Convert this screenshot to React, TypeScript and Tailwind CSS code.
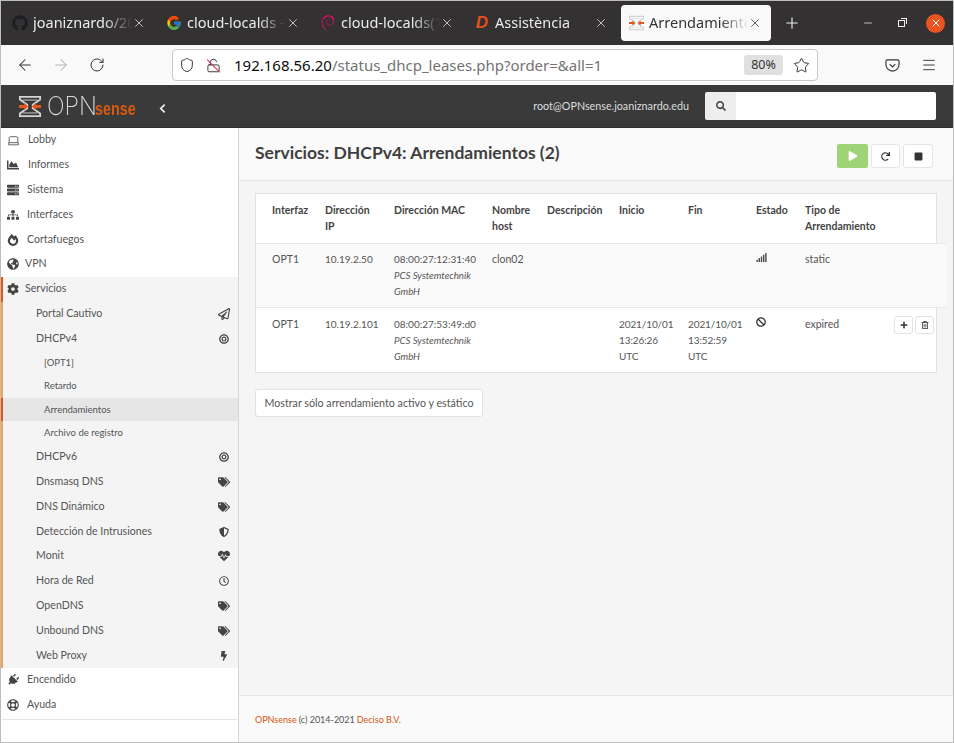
import type { ReactNode } from "react";
import { SiDebian } from "react-icons/si";
import { FcGoogle } from "react-icons/fc";
import {
    FaGithub,
    FaChartArea,
    FaServer,
    FaSitemap,
    FaFireAlt,
    FaGlobeAmericas,
    FaCog,
    FaRegPaperPlane,
    FaBullseye,
    FaTags,
    FaShieldAlt,
    FaHeartbeat,
    FaRegClock,
    FaBolt,
    FaPlug,
    FaRegLifeRing,
    FaPlay,
    FaRedo,
    FaStop,
    FaSearch,
    FaPlus,
    FaRegTrashAlt,
    FaBan,
    FaSignal,
} from "react-icons/fa";
import { ArrowLeft, ArrowRight, Laptop, RotateCw, Shield, LockOpen, Star, Menu, X, Plus, Minus } from "lucide-react";

const LogoMark = ({ className }: { className: string }) => (
    <svg viewBox="0 0 24 25" className={className}>
        <g fill="none" stroke="#d4d4d4" strokeWidth="2">
            <path d="M1 2h22v3L15 10.500v4L23 20v3H1v-3l8-5.500v-4L1 5z" />
            <path d="M4 5.500h16M4 19.500h16" strokeWidth="1" />
        </g>
        <path d="M0 11h5.500V8.500L10 12.500l-4.500 4V14H0zM24 11h-5.500V8.500L14 12.500l4.500 4V14H24z" fill="#e2571b" />
    </svg>
);

const Tab = ({ icon, title, active }: { icon: ReactNode; title: string; active?: boolean }) => (
    <div
        className={`flex items-center w-[150px] h-9 pl-[7px] pr-[9px] rounded-[4px] ${
            active ? "bg-[#f9f9fa] text-[#333]" : "text-[#ebebeb]"
        }`}
    >
        <span className="w-[16px] h-[16px] shrink-0 flex items-center justify-center">{icon}</span>
        <span className="ml-[5px] flex-1 min-w-0 overflow-hidden whitespace-nowrap text-[14.500px] [mask-image:linear-gradient(to_right,black_72%,transparent)]">
            {title}
        </span>
        <X size={14} strokeWidth={1.3} className="shrink-0" />
    </div>
);

const tabs = [
    { title: "joaniznardo/20", icon: <FaGithub size={16} className="text-[#1b1f23]" /> },
    { title: "cloud-localds -", icon: <FcGoogle size={16} /> },
    { title: "cloud-localds(1", icon: <SiDebian size={16} className="text-[#e0115f]" /> },
    {
        title: "Assistència",
        icon: <span className="font-['Liberation_Sans'] text-[17px] font-bold italic text-[#e2501f]">D</span>,
    },
];

type Item = { label: string; icon: ReactNode; level?: number; state?: "open" | "child" | "active"; labelPad?: string };

const ic = 12;
const side = 10;

const menu: Item[] = [
    { label: "Lobby", icon: <Laptop size={13} strokeWidth={1.5} />, labelPad: "w-[21px]" },
    { label: "Informes", icon: <FaChartArea size={ic} />, labelPad: "w-[21px]" },
    { label: "Sistema", icon: <FaServer size={ic} />, labelPad: "w-[20px]" },
    { label: "Interfaces", icon: <FaSitemap size={ic} />, labelPad: "w-[20px]" },
    { label: "Cortafuegos", icon: <FaFireAlt size={ic} />, labelPad: "w-[20px]" },
    { label: "VPN", icon: <FaGlobeAmericas size={ic} />, labelPad: "w-[18px]" },
    { label: "Servicios", icon: <FaCog size={ic} />, state: "open", labelPad: "w-[18px]" },
    { label: "Portal Cautivo", icon: <FaRegPaperPlane size={ic} />, level: 1, state: "child" },
    { label: "DHCPv4", icon: <FaBullseye size={side} />, level: 1, state: "child" },
    { label: "[OPT1]", icon: null, level: 2, state: "child" },
    { label: "Retardo", icon: null, level: 2, state: "child" },
    { label: "Arrendamientos", icon: null, level: 2, state: "active" },
    { label: "Archivo de registro", icon: null, level: 2, state: "child" },
    { label: "DHCPv6", icon: <FaBullseye size={side} />, level: 1, state: "child" },
    { label: "Dnsmasq DNS", icon: <FaTags size={ic} />, level: 1, state: "child" },
    { label: "DNS Dinámico", icon: <FaTags size={ic} />, level: 1, state: "child" },
    { label: "Detección de Intrusiones", icon: <FaShieldAlt size={side} />, level: 1, state: "child" },
    { label: "Monit", icon: <FaHeartbeat size={ic} />, level: 1, state: "child" },
    { label: "Hora de Red", icon: <FaRegClock size={side} />, level: 1, state: "child" },
    { label: "OpenDNS", icon: <FaTags size={ic} />, level: 1, state: "child" },
    { label: "Unbound DNS", icon: <FaTags size={ic} />, level: 1, state: "child" },
    { label: "Web Proxy", icon: <FaBolt size={side} />, level: 1, state: "child" },
    { label: "Encendido", icon: <FaPlug size={ic} className="rotate-45" />, labelPad: "w-[20px]" },
    { label: "Ayuda", icon: <FaRegLifeRing size={ic} />, labelPad: "w-[20px]" },
];

const MenuRow = ({ item }: { item: Item }) => {
    const { label, icon, level, state, labelPad } = item;
    const bar =
        state === "open" || state === "active"
            ? "border-[#e2570f]"
            : state === "child"
              ? "border-[#f3a25c]"
              : "border-transparent";
    const bg = state === "active" ? "bg-[#e6e6e6]" : state ? "bg-[#f4f4f4]" : "bg-white";

    if (level === 2) {
        return (
            <div className={`flex items-center h-[23.4px] pl-[41px] border-l-2 text-[9.500px] ${bar} ${bg}`}>
                {label}
            </div>
        );
    }
    if (level === 1) {
        return (
            <div className={`flex items-center justify-between h-[24.8px] pl-[33px] pr-[8px] border-l-2 text-[10.600px] ${bar} ${bg}`}>
                <span>{label}</span>
                <span className="flex justify-center w-[12px] text-[#444]">{icon}</span>
            </div>
        );
    }
    return (
        <div className={`flex items-center h-[24.8px] pl-[4px] border-l-2 text-[10.600px] ${bar} ${bg}`}>
            <span className={`${labelPad} shrink-0 text-[#444]`}>{icon}</span>
            <span>{label}</span>
        </div>
    );
};

const cols = "grid grid-cols-[53px_69px_98px_55px_72px_69px_68px_49px_89px_1fr] pl-[16px]";

const Vendor = () => (
    <div className="text-[9.700px] italic leading-[16px] text-[#555]">PCS Systemtechnik GmbH</div>
);

const IconBtn = ({ children }: { children: ReactNode }) => (
    <span className="flex items-center justify-center w-[19px] h-[18px] bg-white border border-[#e2e2e2] rounded-[3px] text-[#333]">
        {children}
    </span>
);

export default function App() {
    return (
        <div className="w-[954px] h-[743px] overflow-hidden flex flex-col border border-[#bdbdbd] font-['Lato','Noto_Sans',sans-serif] text-[#555] bg-white">
            {/* browser chrome */}
            <div className="flex items-center h-[44px] shrink-0 pl-[4px] bg-[#333132] font-['Noto_Sans',sans-serif]">
                <div className="flex items-center gap-[4px]">
                    {tabs.map(({ title, icon }) => (
                        <Tab key={title} title={title} icon={icon} />
                    ))}
                    <Tab
                        active
                        title="Arrendamiento"
                        icon={<LogoMark className="w-[15px] h-[16px]" />}
                    />
                </div>
                <Plus size={18} strokeWidth={1.5} className="ml-[12px] text-[#f0f0f0]" />
                <Minus size={12} strokeWidth={1.5} className="ml-[61px] text-[#eee]" />
                <span className="relative ml-[24px] w-[7px] h-[7px] border border-[#eee]">
                    <span className="absolute -top-[3px] -right-[3px] w-[6px] h-[6px] border-t border-r border-[#eee]" />
                </span>
                <span className="ml-[21px] flex items-center justify-center w-[19px] h-[19px] rounded-full bg-[#e95420] text-white">
                    <X size={12} strokeWidth={2} />
                </span>
            </div>
            <div className="flex items-center h-[40px] shrink-0 bg-[#f9f9fa] text-[#333] font-['Noto_Sans',sans-serif]">
                <ArrowLeft size={18} strokeWidth={1.4} className="ml-[15px]" />
                <ArrowRight size={18} strokeWidth={1.4} className="ml-[18px] text-[#b5b5b5]" />
                <RotateCw size={16} strokeWidth={1.5} className="ml-[19px]" />
                <div className="flex items-center ml-[67px] w-[646px] h-[32px] bg-white border border-[#c8c8c8] rounded-[4px]">
                    <Shield size={16} strokeWidth={1.5} className="ml-[6px]" />
                    <span className="relative ml-[11px] flex">
                        <LockOpen size={15} strokeWidth={1.5} />
                        <span className="absolute left-[7px] top-[-1px] h-[18px] w-[1px] -rotate-45 bg-[#e22850]" />
                    </span>
                    <span className="ml-[13px] text-[15px] whitespace-nowrap text-[#737373]">
                        <span className="text-[#0c0c0d]">192.168.56.20</span>/status_dhcp_leases.php?order=&all=1
                    </span>
                    <span className="ml-auto flex items-center justify-center w-[39px] h-[20px] rounded-[3px] bg-[#e0e0e1] text-[12.500px]">
                        80%
                    </span>
                    <Star size={17} strokeWidth={1.4} className="ml-[10px] mr-[7px]" />
                </div>
                <svg viewBox="0 0 16 16" className="ml-[67px] w-[15px] h-[15px]" fill="none" stroke="currentColor" strokeWidth="1.200">
                    <path d="M2.500 2h11A1.500 1.500 0 0 1 15 3.500V7a7 7 0 0 1-14 0V3.500A1.500 1.500 0 0 1 2.500 2z" />
                    <path d="M5 6.500l3 3 3-3" />
                </svg>
                <Menu size={16} strokeWidth={1.4} className="ml-[21px]" />
            </div>
            {/* opnsense header */}
            <div className="flex items-center h-[43px] shrink-0 bg-[#3a3a3a] border-b border-[#2e2e2e]">
                <div className="flex items-end ml-[17px] w-[124px] shrink-0">
                    <LogoMark className="w-[24px] h-[23px] shrink-0" />
                    <span className="ml-[5px] w-[45px] font-['Inter'] text-[26px] leading-[24px] font-extralight text-[#d8d8d8] origin-left scale-x-[0.9]">
                        OPN
                    </span>
                    <span className="ml-[3px] w-[41px] font-['Liberation_Sans'] text-[18px] leading-[18px] font-bold text-[#d9590f] origin-left scale-x-[0.8]">
                        sense
                    </span>
                </div>
                <svg viewBox="0 0 8 12" className="ml-[17px] mt-[5px] w-[7px] h-[11px]" fill="none" stroke="#eee" strokeWidth="2">
                    <path d="M6.500 1.500L2 6l4.500 4.500" />
                </svg>
                <span className="ml-auto text-[10.750px] text-[#ddd]">root@OPNsense.joaniznardo.edu</span>
                <div className="flex ml-[16px] mr-[17px] w-[231px] h-[28px] rounded-[2px] overflow-hidden">
                    <span className="flex items-center justify-center w-[31px] bg-[#eee] text-[#444]">
                        <FaSearch size={10} />
                    </span>
                    <span className="flex-1 bg-white" />
                </div>
            </div>
            <div className="flex flex-1 min-h-0">
                {/* sidebar */}
                <div className="w-[238px] shrink-0 bg-white border-r border-[#d6d6d6]">
                    {menu.map((item) => (
                        <MenuRow key={item.label} item={item} />
                    ))}
                    <div className="mt-[1px] mx-[1px] border-t border-[#e5e5e5]" />
                </div>
                {/* content */}
                <div className="flex-1 flex flex-col bg-[#f5f5f5] min-w-0">
                    <div className="flex items-center justify-between h-[53px] shrink-0 pl-[16px] pr-[20px] bg-[#fafafa] border-b border-[#e7e7e7]">
                        <h1 className="mb-[2px] text-[17.500px] font-bold text-[#3f3f3f]">Servicios: DHCPv4: Arrendamientos (2)</h1>
                        <div className="flex gap-[3px] mt-[4px]">
                            <span className="flex items-center justify-center w-[31px] h-[24px] rounded-[2px] bg-[#9ed477] text-white">
                                <FaPlay size={10} />
                            </span>
                            <span className="flex items-center justify-center w-[29px] h-[24px] rounded-[3px] bg-white border border-[#e5e5e5] text-[#333]">
                                <FaRedo size={9} />
                            </span>
                            <span className="flex items-center justify-center w-[30px] h-[24px] rounded-[3px] bg-white border border-[#e5e5e5] text-[#333]">
                                <FaStop size={9} />
                            </span>
                        </div>
                    </div>
                    <div className="flex-1 px-[16px] pt-[12px] text-[10.500px] leading-[16px]">
                        <div className="bg-white border border-[#e2e2e2]">
                            <div className={`${cols} h-[49px] pt-[8px] font-bold text-[#444]`}>
                                <span>Interfaz</span>
                                <span>Dirección<br />IP</span>
                                <span>Dirección MAC</span>
                                <span>Nombre<br />host</span>
                                <span>Descripción</span>
                                <span>Inicio</span>
                                <span>Fin</span>
                                <span>Estado</span>
                                <span>Tipo de<br />Arrendamiento</span>
                            </div>
                            <div className={`${cols} h-[65px] pt-[7px] -mr-[10px] bg-[#fafafa] border-y border-[#e8e8e8]`}>
                                <span>OPT1</span>
                                <span className="text-[10px]">10.19.2.50</span>
                                <div className="pr-[10px] text-[10px]">
                                    08:00:27:12:31:40
                                    <Vendor />
                                </div>
                                <span>clon02</span>
                                <span />
                                <span />
                                <span />
                                <span className="text-[#444] pt-[1px]"><FaSignal size={11} /></span>
                                <span>static</span>
                            </div>
                            <div className={`${cols} h-[64px] pt-[8px]`}>
                                <span>OPT1</span>
                                <span className="text-[10px]">10.19.2.101</span>
                                <div className="pr-[10px] text-[10px]">
                                    08:00:27:53:49:d0
                                    <Vendor />
                                </div>
                                <span />
                                <span />
                                <span className="text-[10px] tracking-[-0.1px]">2021/10/01<br />13:26:26<br />UTC</span>
                                <span className="text-[10px] tracking-[-0.1px]">2021/10/01<br />13:52:59<br />UTC</span>
                                <span className="text-[#333] pt-[1px]"><FaBan size={10} /></span>
                                <span>expired</span>
                                <div className="flex gap-[2px]">
                                    <IconBtn><FaPlus size={8} /></IconBtn>
                                    <IconBtn><FaRegTrashAlt size={8} /></IconBtn>
                                </div>
                            </div>
                        </div>
                        <button className="mt-[16px] h-[28px] w-[228px] bg-white border border-[#e2e2e2] rounded-[3px] text-[10.700px]">
                            Mostrar sólo arrendamiento activo y estático
                        </button>
                    </div>
                    <div className="h-[47px] shrink-0 flex items-center pl-[16px] pt-[2px] bg-[#fafafa] border-t border-[#e7e7e7] text-[9px]">
                        <span className="text-[#d2570f]">OPNsense</span>
                        <span className="mx-[2px]">(c) 2014-2021</span>
                        <span className="text-[#d2570f]">Deciso B.V.</span>
                    </div>
                </div>
            </div>
        </div>
    );
}
